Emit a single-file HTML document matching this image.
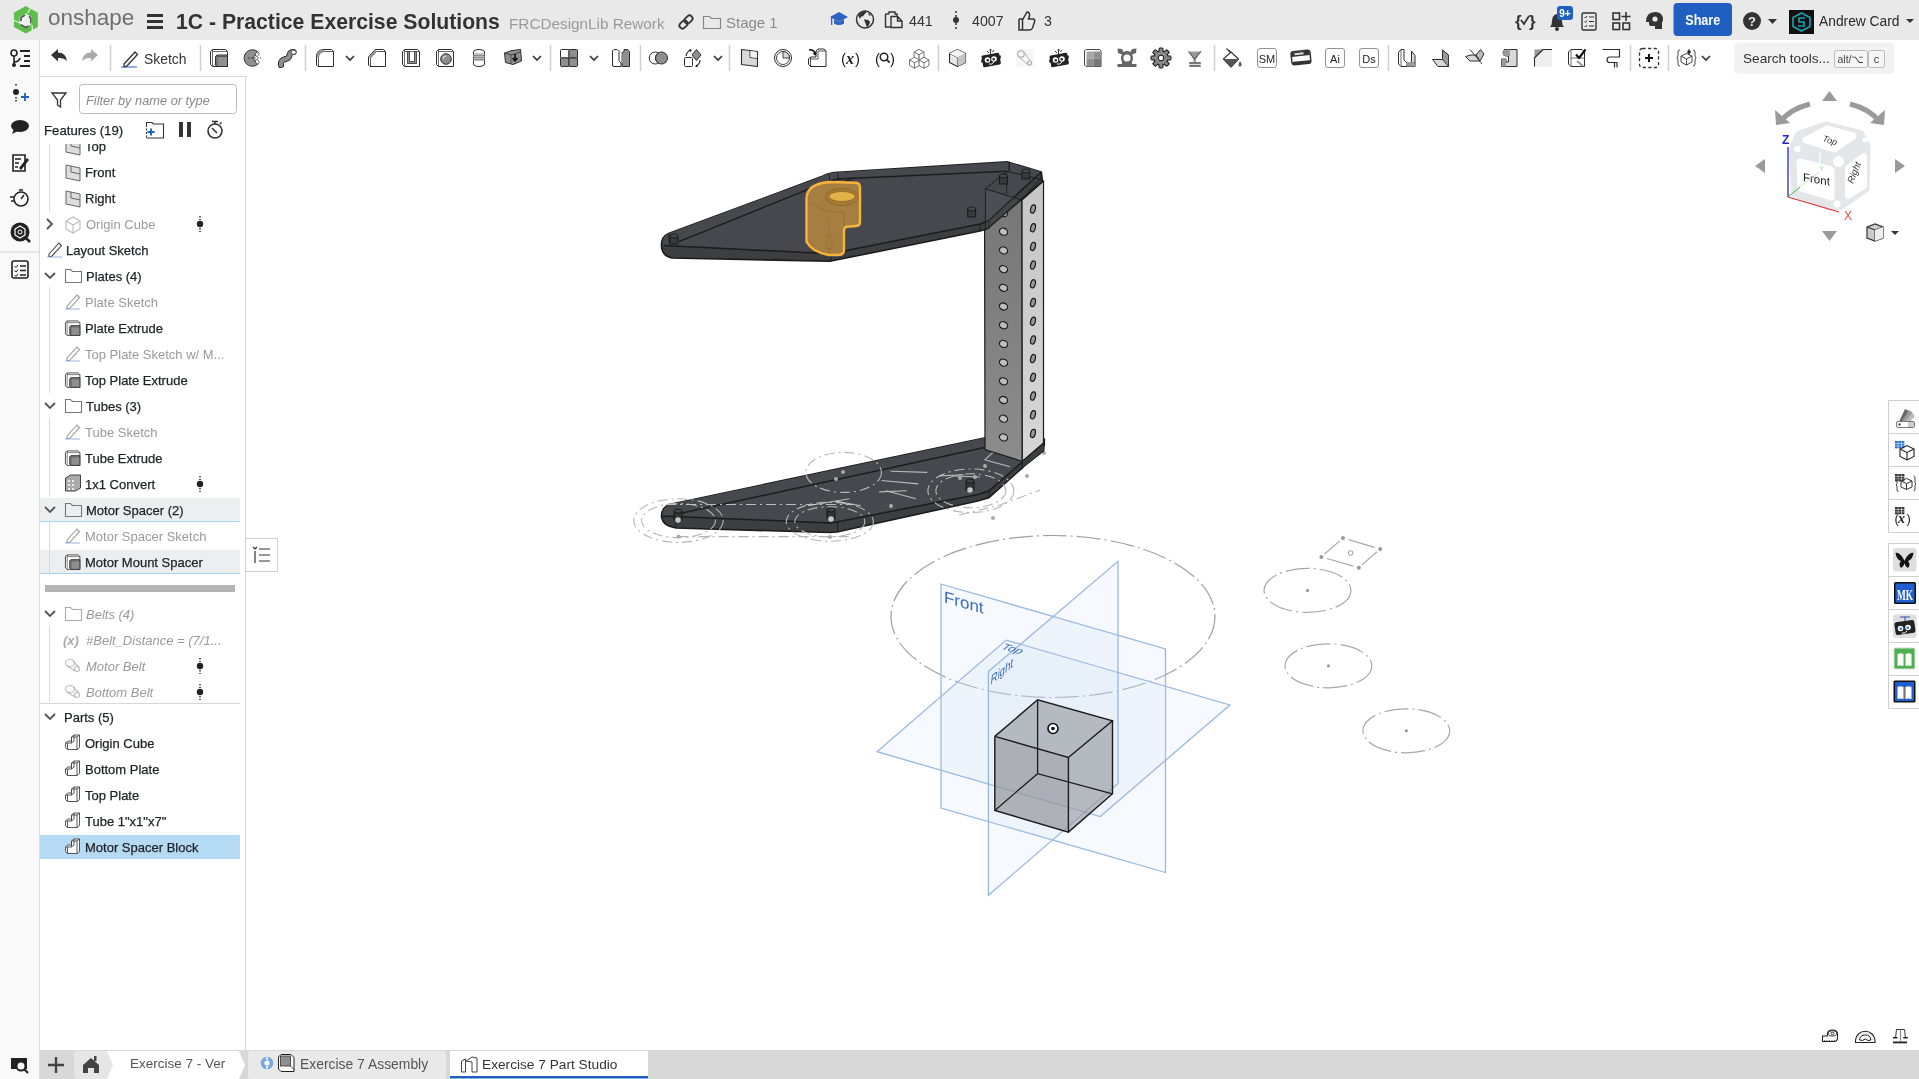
<!DOCTYPE html>
<html><head><meta charset="utf-8"><style>
html,body{margin:0;padding:0;width:1919px;height:1079px;overflow:hidden;background:#fff}
svg{display:block;will-change:transform;font-family:"Liberation Sans", sans-serif}
</style></head><body>
<svg width="1919" height="1079" viewBox="0 0 1919 1079">
<rect x="0" y="0" width="1919" height="1079" fill="#ffffff" />
<rect x="0" y="0" width="1919" height="40" fill="#e9e9e9" />
<rect x="0" y="40" width="40" height="1039" fill="#f9f9f9" />
<line x1="39.5" y1="40" x2="39.5" y2="1079" stroke="#dcdcdc" stroke-width="1" />
<line x1="40" y1="76.5" x2="245" y2="76.5" stroke="#d6d6d6" stroke-width="1" />
<line x1="245.5" y1="76" x2="245.5" y2="1050" stroke="#d6d6d6" stroke-width="1" />
<rect x="40" y="1050" width="1879" height="29" fill="#d8d8d8" />
<polygon points="25.8,6 37.8,12.8 37.8,27 25.8,33.6 13.9,27 13.9,12.8" fill="#5bbf4a"/><polygon points="25.8,13.5 32,17 32,24 25.8,27.5 19.6,24 19.6,17" fill="#eef2ee"/><path d="M13,20 L21,23.5 M30.5,8.5 L27.5,13 M32,25 L32.5,31" stroke="#e9f5e6" stroke-width="1.3"/><path d="M21,21 v-3.5 l4,-2.5 M28.8,16.5 l2,1.2 v5.8 M28.5,26 l-2.7,1.5 l-5,-2.8" fill="none" stroke="#5a5a5a" stroke-width="1.8"/>
<text x="48" y="25" font-size="22.5" fill="#6f6f6f" font-weight="normal" font-style="normal" text-anchor="start" >onshape</text>
<rect x="147" y="14.0" width="16" height="3" fill="#333" />
<rect x="147" y="20.0" width="16" height="3" fill="#333" />
<rect x="147" y="26.0" width="16" height="3" fill="#333" />
<text x="176" y="29" font-size="21.2" fill="#333" font-weight="bold" font-style="normal" text-anchor="start" >1C - Practice Exercise Solutions</text>
<text x="509" y="29" font-size="15.3" fill="#9a9a9a" font-weight="normal" font-style="normal" text-anchor="start" >FRCDesignLib Rework</text>
<g transform="translate(686,22) rotate(-45)" fill="none" stroke="#333" stroke-width="1.8"><rect x="-8" y="-3" width="9" height="6" rx="3"/><rect x="-1" y="-3" width="9" height="6" rx="3"/></g>
<path d="M703.5,16.5 h6 l2,2 h9 v10 h-17 z" fill="none" stroke="#888" stroke-width="1.2"/>
<text x="726" y="28" font-size="15" fill="#8a8a8a" font-weight="normal" font-style="normal" text-anchor="start" >Stage 1</text>
<g fill="#2d62c2"><polygon points="839,12 848,17 839,22 830,17"/><path d="M834,19.5 v4 q5,3 10,0 v-4 l-5,2.5 z"/><rect x="831" y="17" width="1.3" height="8"/></g>
<circle cx="865" cy="19.5" r="8.5" fill="none" stroke="#333" stroke-width="1.5"/><path d="M858.5,15.5 q2,-4 7,-4.5 l1,1.5 q-2,1 -2.5,2.5 q-1,2 -3,1.5 q0,2 -1.5,2 z M864,19.5 q4,-0.5 6,2 q0,3 -2,5 q-2,1 -2,-2 q-1,-2 -2,-5 z M868,12.5 q2,1 3,3 l-2,0 z" fill="#333"/>
<path d="M889,14 v-2 h6 v2 h2 v2 M885.5,14 h3.5 M885.5,14 v13 h5" fill="none" stroke="#333" stroke-width="1.4"/><path d="M891,16.5 h6.5 l4.5,4.5 v6.5 h-11 z M897.5,16.5 v4.5 h4.5" fill="none" stroke="#333" stroke-width="1.4"/>
<text x="909" y="26" font-size="14.2" fill="#333" font-weight="normal" font-style="normal" text-anchor="start" >441</text>
<circle cx="956" cy="20" r="3" fill="#333"/><line x1="956" y1="11" x2="956" y2="29" stroke="#333" stroke-width="1.5" stroke-dasharray="2,2"/>
<text x="972" y="26" font-size="14.2" fill="#333" font-weight="normal" font-style="normal" text-anchor="start" >4007</text>
<path d="M1019,19 h4 l4,-7 q3,0 2.5,4 l-1,3 h5 q2,1 1,3 l-2,6 q-1,2 -3,2 h-7 v-11 M1019,19 v11 h4" fill="none" stroke="#333" stroke-width="1.5"/>
<text x="1044" y="26" font-size="14.2" fill="#333" font-weight="normal" font-style="normal" text-anchor="start" >3</text>
<text x="1515" y="27" font-size="17" fill="#333" font-weight="bold">{</text><path d="M1521,20 l3,4 l5,-8" fill="none" stroke="#333" stroke-width="1.8"/><text x="1529" y="27" font-size="17" fill="#333" font-weight="bold">}</text>
<path d="M1550,27 q2,-2 2,-6 q0,-6 5,-7 q5,1 5,7 q0,4 2,6 z" fill="#333"/><circle cx="1557" cy="29" r="2" fill="#333"/>
<rect x="1557" y="6" width="16" height="14" fill="#1f5fc2" rx="3"/>
<text x="1565" y="17" font-size="10" fill="#fff" font-weight="bold" font-style="normal" text-anchor="middle" >9+</text>
<rect x="1582" y="13" width="14" height="17" rx="1.5" fill="none" stroke="#333" stroke-width="1.4"/><path d="M1584.5,17 l1,1 l1.5,-2 M1584.5,21.5 l1,1 l1.5,-2 M1584.5,26 l1,1 l1.5,-2" fill="none" stroke="#333" stroke-width="1"/><path d="M1589,17 h5 M1589,21.5 h5 M1589,26 h5" stroke="#333" stroke-width="1.2"/>
<g fill="none" stroke="#333" stroke-width="1.6"><rect x="1613" y="13" width="6.5" height="6.5"/><rect x="1613" y="23" width="6.5" height="6.5"/><rect x="1623" y="23" width="6.5" height="6.5"/></g><path d="M1626,12 v9 M1621.5,16.5 h9" stroke="#333" stroke-width="1.6"/>
<path d="M1646,22 q0,-10 9,-10 q8,0 8,8 l-1,3 v6 h-7 v-3 h-4 q-2,0 -2,-2 v-2 z" fill="#333"/><circle cx="1655" cy="19" r="2.6" fill="#e9e9e9"/>
<rect x="1673.5" y="3" width="58.5" height="33" fill="#1f5fc2" rx="4"/>
<text x="1702.75" y="25.3" font-size="14.5" fill="#ffffff" font-weight="bold" font-style="normal" text-anchor="middle" textLength="35" lengthAdjust="spacingAndGlyphs">Share</text>
<circle cx="1752" cy="21" r="9" fill="#333"/><text x="1752" y="26" font-size="13" fill="#e9e9e9" font-weight="bold" text-anchor="middle">?</text>
<polygon points="1768,19 1777,19 1772.5,24" fill="#333"/>
<rect x="1789" y="10" width="25" height="24" fill="#111" />
<g fill="none" stroke="#19a3b3" stroke-width="1.6"><polygon points="1801.5,13 1810,17.5 1810,26.5 1801.5,31 1793,26.5 1793,17.5"/><path d="M1805,18 h-6 v4 h5 v4 h-6"/></g>
<text x="1819" y="26" font-size="13.8" fill="#2a2a2a" font-weight="normal" font-style="normal" text-anchor="start" >Andrew Card</text>
<polygon points="1906,19 1914,19 1910,23" fill="#333"/>
<ellipse cx="1053" cy="616.5" rx="162" ry="81" fill="none" stroke="#a0a0a0" stroke-width="1.2" stroke-dasharray="24,4,2,4"/>
<polygon points="941,584 1165.5,649 1165.5,872.5 941,808" fill="rgba(205,222,242,0.18)" stroke="#9ab8df" stroke-width="1.3" />
<polygon points="877,751.7 1006.2,640.1 1229.9,705 1100.2,816.5" fill="rgba(205,222,242,0.18)" stroke="#9ab8df" stroke-width="1.3" />
<polygon points="988.4,671.6 1118,561.3 1118,783.5 988.4,895.3" fill="rgba(205,222,242,0.18)" stroke="#9ab8df" stroke-width="1.3" />
<text x="0" y="0" font-size="16.3" fill="#3a6cb8" transform="matrix(1.04,0.3,0,1,944,602.3)">Front</text>
<text x="0" y="0" font-size="11" fill="#3a6cb8" transform="matrix(1.13,0.33,-0.755,0.656,1000,648.4)">Top</text>
<text x="0" y="0" font-size="12" fill="#3a6cb8" transform="matrix(0.80,-0.66,-0.12,1.15,990.3,685.3)">Right</text>
<polygon points="994.8,736.4 1037.6,699.8 1112.5,720.9 1112.5,793.8 1068.4,832.1 994.8,810.4" fill="rgba(150,152,156,0.62)" stroke="none" stroke-width="1" />
<polygon points="994.8,736.4 1068.4,757.5 1068.4,832.1 994.8,810.4" fill="rgba(120,122,126,0.15)" stroke="none" stroke-width="1" />
<polyline points="994.8,736.4 1037.6,699.8 1112.5,720.9 1068.4,757.5 994.8,736.4" fill="none" stroke="#1c1c1c" stroke-width="1.4" />
<polyline points="994.8,736.4 994.8,810.4 1068.4,832.1 1112.5,793.8 1112.5,720.9" fill="none" stroke="#1c1c1c" stroke-width="1.4" />
<polyline points="1068.4,757.5 1068.4,832.1" fill="none" stroke="#1c1c1c" stroke-width="1.4" />
<polyline points="1037.6,699.8 1037.6,773.7" fill="none" stroke="#1c1c1c" stroke-width="1.3" />
<polyline points="994.8,810.4 1037.6,773.7 1112.5,793.8" fill="none" stroke="#1c1c1c" stroke-width="1.3" />
<circle cx="1053" cy="728.5" r="5" fill="#fff" stroke="#111" stroke-width="1.6"/><circle cx="1053" cy="728.5" r="1.8" fill="#111"/>
<ellipse cx="1307.5" cy="590.4" rx="43.4" ry="22" fill="none" stroke="#a8a8a8" stroke-width="1.2" stroke-dasharray="24,4,2,4"/><circle cx="1307.5" cy="590.4" r="1.6" fill="#999"/>
<ellipse cx="1328.4" cy="665.8" rx="43.4" ry="22" fill="none" stroke="#a8a8a8" stroke-width="1.2" stroke-dasharray="24,4,2,4"/><circle cx="1328.4" cy="665.8" r="1.6" fill="#999"/>
<ellipse cx="1406.3" cy="730.8" rx="43.4" ry="22" fill="none" stroke="#a8a8a8" stroke-width="1.2" stroke-dasharray="24,4,2,4"/><circle cx="1406.3" cy="730.8" r="1.6" fill="#999"/>
<polyline points="1348.58,539.65 1374.6200000000001,547.35" fill="none" stroke="#a8a8a8" stroke-width="1.2" />
<polyline points="1376.99,551.8050000000001 1362.01,564.895" fill="none" stroke="#a8a8a8" stroke-width="1.2" />
<polyline points="1353.19,566.08 1327.01,558.52" fill="none" stroke="#a8a8a8" stroke-width="1.2" />
<polyline points="1324.64,554.0649999999999 1339.76,540.835" fill="none" stroke="#a8a8a8" stroke-width="1.2" />
<circle cx="1343" cy="538" r="2" fill="#999"/>
<circle cx="1380.2" cy="549" r="2" fill="#999"/>
<circle cx="1358.8" cy="567.7" r="2" fill="#999"/>
<circle cx="1321.4" cy="556.9" r="2" fill="#999"/>
<circle cx="1350.6" cy="553" r="2.3" fill="#fff" stroke="#999" stroke-width="1"/>
<path d="M669.3,504.5 L1008,433 L1044.3,439 L1044.3,446 L1022.4,467.8 L989,497.7 L977.7,501 L837,532 L829.8,532.5 L676,528 Q663,526 661.5,517 Q661,508 669.3,504.5 Z" fill="#3c3e42" stroke="#1c1c1c" stroke-width="1.6" stroke-linejoin="round"/>
<path d="M669.3,504.5 L1008,433 L1044.3,439 L1022.4,462 L989,490.8 L978.9,494.2 L837.9,521.7 L829.8,522.9 L663,516 Q661,509 669.3,504.5 Z" fill="#46484e"/>
<polyline points="662.4,516 829.8,522.9 837.9,521.7 978.9,494.2 989,490.8 1022.4,462 1044.3,439" fill="none" stroke="#1c1c1c" stroke-width="1.5" />
<polyline points="678.7,513.7 984.5,447.5" fill="none" stroke="#1c1c1c" stroke-width="1.4" />
<polyline points="676,519 676,528" fill="none" stroke="#1c1c1c" stroke-width="0.9" />
<polyline points="837.5,522 837.5,532" fill="none" stroke="#1c1c1c" stroke-width="1" />
<polyline points="989,491 989,498" fill="none" stroke="#1c1c1c" stroke-width="1" />
<polyline points="1022.4,462 1022.4,468" fill="none" stroke="#1c1c1c" stroke-width="1" />
<rect x="674" y="511" width="8" height="9" fill="#333" stroke="#111" stroke-width="0.8"/><ellipse cx="678" cy="511" rx="4" ry="2" fill="#444" stroke="#111" stroke-width="0.8"/><circle cx="678" cy="520" r="2.8" fill="#c8c8c8"/>
<rect x="827" y="510" width="8" height="9" fill="#333" stroke="#111" stroke-width="0.8"/><ellipse cx="831" cy="510" rx="4" ry="2" fill="#444" stroke="#111" stroke-width="0.8"/><circle cx="831" cy="519" r="2.8" fill="#c8c8c8"/>
<rect x="966" y="481" width="8" height="9" fill="#333" stroke="#111" stroke-width="0.8"/><ellipse cx="970" cy="481" rx="4" ry="2" fill="#444" stroke="#111" stroke-width="0.8"/><circle cx="970" cy="490" r="2.8" fill="#c8c8c8"/>
<ellipse cx="678.5" cy="520.6" rx="44.7" ry="21.8" fill="none" stroke="#b5b5b5" stroke-width="1.1" stroke-dasharray="10,4,2,4"/>
<ellipse cx="678.5" cy="520.6" rx="37" ry="17" fill="none" stroke="#b5b5b5" stroke-width="1.1" stroke-dasharray="10,4,2,4"/>
<ellipse cx="829.8" cy="521.7" rx="43.6" ry="19.5" fill="none" stroke="#b5b5b5" stroke-width="1.1" stroke-dasharray="10,4,2,4"/>
<ellipse cx="829.8" cy="521.7" rx="35" ry="15" fill="none" stroke="#b5b5b5" stroke-width="1.1" stroke-dasharray="10,4,2,4"/>
<ellipse cx="843.6" cy="472.4" rx="37.8" ry="20" fill="none" stroke="#b5b5b5" stroke-width="1.1" stroke-dasharray="10,4,2,4"/>
<ellipse cx="970.9" cy="490.8" rx="43" ry="21.8" fill="none" stroke="#b5b5b5" stroke-width="1.1" stroke-dasharray="10,4,2,4"/>
<ellipse cx="970.9" cy="490.8" rx="35" ry="17" fill="none" stroke="#b5b5b5" stroke-width="1.1" stroke-dasharray="10,4,2,4"/>
<polyline points="666,504.5 854,504.5" fill="none" stroke="rgba(200,200,200,0.9)" stroke-width="1.1" stroke-dasharray="10,4,2,4"/>
<polyline points="678.5,536.6 849,536.6" fill="none" stroke="#b5b5b5" stroke-width="1.1" stroke-dasharray="10,4,2,4"/>
<polyline points="890.6,471.3 927.3,472.4" fill="none" stroke="rgba(200,200,200,0.9)" stroke-width="1.1" />
<polyline points="881.5,480.5 918.2,483.9" fill="none" stroke="rgba(200,200,200,0.9)" stroke-width="1.1" />
<polyline points="879.2,491.9 906.7,490.8" fill="none" stroke="rgba(200,200,200,0.9)" stroke-width="1.1" />
<polyline points="886,490.8 915.9,498.8" fill="none" stroke="rgba(200,200,200,0.9)" stroke-width="1.1" />
<polyline points="938.8,475.9 964,474.7" fill="none" stroke="rgba(200,200,200,0.9)" stroke-width="1.1" />
<polyline points="955,476 980,477" fill="none" stroke="rgba(200,200,200,0.9)" stroke-width="1.1" />
<polyline points="808,505.7 849.4,498.8" fill="none" stroke="rgba(200,200,200,0.9)" stroke-width="1.1" />
<polyline points="835.6,501.1 860.8,505.7" fill="none" stroke="rgba(200,200,200,0.9)" stroke-width="1.1" />
<polyline points="984.7,459.8 1009.9,466.7" fill="none" stroke="rgba(200,200,200,0.9)" stroke-width="1.1" />
<polyline points="984.7,459.8 1005.3,441.5" fill="none" stroke="rgba(200,200,200,0.9)" stroke-width="1.1" />
<polyline points="1005.3,441.5 1030,447" fill="none" stroke="rgba(200,200,200,0.9)" stroke-width="1.1" />
<polyline points="959,515 1000,505 1040,490" fill="none" stroke="#b5b5b5" stroke-width="1.1" stroke-dasharray="10,4,2,4"/>
<circle cx="678.5" cy="536.6" r="2" fill="#aaa"/>
<circle cx="830" cy="537" r="2" fill="#aaa"/>
<circle cx="843" cy="472" r="2" fill="#aaa"/>
<circle cx="836" cy="479" r="2" fill="#aaa"/>
<circle cx="891" cy="506" r="2" fill="#aaa"/>
<circle cx="960" cy="478" r="2" fill="#aaa"/>
<circle cx="975" cy="477" r="2" fill="#aaa"/>
<circle cx="993" cy="518" r="2" fill="#aaa"/>
<circle cx="1027" cy="476" r="2" fill="#aaa"/>
<circle cx="1044" cy="453" r="2" fill="#aaa"/>
<circle cx="985" cy="466" r="2" fill="#aaa"/>
<defs><linearGradient id="tl" x1="0" y1="0" x2="0" y2="1"><stop offset="0" stop-color="#767676"/><stop offset="1" stop-color="#8c8c8c"/></linearGradient><linearGradient id="tr" x1="0" y1="0" x2="0" y2="1"><stop offset="0" stop-color="#c6c6c6"/><stop offset="1" stop-color="#d6d6d6"/></linearGradient><linearGradient id="yel" x1="0" y1="0" x2="1" y2="0"><stop offset="0" stop-color="#c4913a"/><stop offset="1" stop-color="#b08236"/></linearGradient></defs>
<polygon points="984.5,189 1022,200 1022.3,461.3 985,449.6" fill="url(#tl)" stroke="#1c1c1c" stroke-width="1.2" />
<polygon points="1022,200 1043.5,181 1043.5,443 1022.3,461.3" fill="url(#tr)" stroke="#1c1c1c" stroke-width="1.2" />
<polygon points="1022.3,461.3 1044,443 1044,451 1022.3,468" fill="#3c3e42" stroke="#1c1c1c" stroke-width="1" />
<ellipse cx="1003.5" cy="213.0" rx="4.2" ry="3.4" transform="rotate(25 1003.5 213.0)" fill="#bdbdbd" stroke="#1a1a1a" stroke-width="1.2"/>
<ellipse cx="1033" cy="209.0" rx="2.3" ry="4.2" transform="rotate(15 1033 209.0)" fill="#999" stroke="#1a1a1a" stroke-width="1.2"/>
<ellipse cx="1003.5" cy="231.7" rx="4.2" ry="3.4" transform="rotate(25 1003.5 231.7)" fill="#bdbdbd" stroke="#1a1a1a" stroke-width="1.2"/>
<ellipse cx="1033" cy="227.7" rx="2.3" ry="4.2" transform="rotate(15 1033 227.7)" fill="#999" stroke="#1a1a1a" stroke-width="1.2"/>
<ellipse cx="1003.5" cy="250.4" rx="4.2" ry="3.4" transform="rotate(25 1003.5 250.4)" fill="#bdbdbd" stroke="#1a1a1a" stroke-width="1.2"/>
<ellipse cx="1033" cy="246.4" rx="2.3" ry="4.2" transform="rotate(15 1033 246.4)" fill="#999" stroke="#1a1a1a" stroke-width="1.2"/>
<ellipse cx="1003.5" cy="269.1" rx="4.2" ry="3.4" transform="rotate(25 1003.5 269.1)" fill="#bdbdbd" stroke="#1a1a1a" stroke-width="1.2"/>
<ellipse cx="1033" cy="265.1" rx="2.3" ry="4.2" transform="rotate(15 1033 265.1)" fill="#999" stroke="#1a1a1a" stroke-width="1.2"/>
<ellipse cx="1003.5" cy="287.8" rx="4.2" ry="3.4" transform="rotate(25 1003.5 287.8)" fill="#bdbdbd" stroke="#1a1a1a" stroke-width="1.2"/>
<ellipse cx="1033" cy="283.8" rx="2.3" ry="4.2" transform="rotate(15 1033 283.8)" fill="#999" stroke="#1a1a1a" stroke-width="1.2"/>
<ellipse cx="1003.5" cy="306.5" rx="4.2" ry="3.4" transform="rotate(25 1003.5 306.5)" fill="#bdbdbd" stroke="#1a1a1a" stroke-width="1.2"/>
<ellipse cx="1033" cy="302.5" rx="2.3" ry="4.2" transform="rotate(15 1033 302.5)" fill="#999" stroke="#1a1a1a" stroke-width="1.2"/>
<ellipse cx="1003.5" cy="325.2" rx="4.2" ry="3.4" transform="rotate(25 1003.5 325.2)" fill="#bdbdbd" stroke="#1a1a1a" stroke-width="1.2"/>
<ellipse cx="1033" cy="321.2" rx="2.3" ry="4.2" transform="rotate(15 1033 321.2)" fill="#999" stroke="#1a1a1a" stroke-width="1.2"/>
<ellipse cx="1003.5" cy="343.9" rx="4.2" ry="3.4" transform="rotate(25 1003.5 343.9)" fill="#bdbdbd" stroke="#1a1a1a" stroke-width="1.2"/>
<ellipse cx="1033" cy="339.9" rx="2.3" ry="4.2" transform="rotate(15 1033 339.9)" fill="#999" stroke="#1a1a1a" stroke-width="1.2"/>
<ellipse cx="1003.5" cy="362.6" rx="4.2" ry="3.4" transform="rotate(25 1003.5 362.6)" fill="#bdbdbd" stroke="#1a1a1a" stroke-width="1.2"/>
<ellipse cx="1033" cy="358.6" rx="2.3" ry="4.2" transform="rotate(15 1033 358.6)" fill="#999" stroke="#1a1a1a" stroke-width="1.2"/>
<ellipse cx="1003.5" cy="381.3" rx="4.2" ry="3.4" transform="rotate(25 1003.5 381.3)" fill="#bdbdbd" stroke="#1a1a1a" stroke-width="1.2"/>
<ellipse cx="1033" cy="377.3" rx="2.3" ry="4.2" transform="rotate(15 1033 377.3)" fill="#999" stroke="#1a1a1a" stroke-width="1.2"/>
<ellipse cx="1003.5" cy="400.0" rx="4.2" ry="3.4" transform="rotate(25 1003.5 400.0)" fill="#bdbdbd" stroke="#1a1a1a" stroke-width="1.2"/>
<ellipse cx="1033" cy="396.0" rx="2.3" ry="4.2" transform="rotate(15 1033 396.0)" fill="#999" stroke="#1a1a1a" stroke-width="1.2"/>
<ellipse cx="1003.5" cy="418.7" rx="4.2" ry="3.4" transform="rotate(25 1003.5 418.7)" fill="#bdbdbd" stroke="#1a1a1a" stroke-width="1.2"/>
<ellipse cx="1033" cy="414.7" rx="2.3" ry="4.2" transform="rotate(15 1033 414.7)" fill="#999" stroke="#1a1a1a" stroke-width="1.2"/>
<ellipse cx="1003.5" cy="437.4" rx="4.2" ry="3.4" transform="rotate(25 1003.5 437.4)" fill="#bdbdbd" stroke="#1a1a1a" stroke-width="1.2"/>
<ellipse cx="1033" cy="433.4" rx="2.3" ry="4.2" transform="rotate(15 1033 433.4)" fill="#999" stroke="#1a1a1a" stroke-width="1.2"/>
<path d="M668.5,233.5 L821.6,176.6 Q827,173.5 833.8,172.5 L1007.5,161.9 L1041.25,171.9 L1042.5,181.25 L987.5,228.75 L980,231 L829.7,261.3 L672,258 Q662,256 661.5,246 Q661,237 668.5,233.5 Z" fill="#3c3e42" stroke="#1c1c1c" stroke-width="1.6" stroke-linejoin="round"/>
<path d="M668.5,233.5 L821.6,176.6 Q827,173.5 833.8,172.5 L1007.5,161.9 L1041.25,171.9 L988.75,220 L980,223.75 L833.8,252.5 L825,253 L663,245 Q661,237 668.5,233.5 Z" fill="#46484e"/>
<polyline points="664,245.5 825,253.5 833.8,253 980,224 988.75,220.5 1041.25,172" fill="none" stroke="#1c1c1c" stroke-width="1.5" />
<polyline points="679,241.7 823,183.3 837.6,179 1006.7,171.3" fill="none" stroke="#1c1c1c" stroke-width="1.4" />
<polyline points="829.5,175 829.5,183" fill="none" stroke="#1c1c1c" stroke-width="0.9" />
<polyline points="838,172.5 838,180" fill="none" stroke="#1c1c1c" stroke-width="0.9" />
<polyline points="669,234 669,243" fill="none" stroke="#1c1c1c" stroke-width="0.9" />
<polyline points="831,253.5 831,261.3" fill="none" stroke="#1c1c1c" stroke-width="0.9" />
<polyline points="980,224 980,231" fill="none" stroke="#1c1c1c" stroke-width="0.9" />
<polyline points="989,220.5 989,229" fill="none" stroke="#1c1c1c" stroke-width="0.9" />
<polyline points="1009.2,162 1009.2,171" fill="none" stroke="#1c1c1c" stroke-width="0.9" />
<polyline points="1041,172 1041,181" fill="none" stroke="#1c1c1c" stroke-width="0.9" />
<polygon points="985.4,188.8 1021.7,200 989,228.5 985.4,229.5" fill="rgba(120,120,124,0.12)" stroke="none" stroke-width="1" />
<polyline points="985.4,188.8 1006.7,171.3 1040,179.2 1021.7,200 985.4,188.8" fill="none" stroke="#1c1c1c" stroke-width="1" />
<polyline points="985.4,188.8 985.4,229" fill="none" stroke="#1c1c1c" stroke-width="1" />
<polyline points="1006.7,171.3 1006.7,194" fill="none" stroke="#1c1c1c" stroke-width="0.8" />
<polyline points="1009.2,161.7 1009.2,171" fill="none" stroke="#1c1c1c" stroke-width="0.8" />
<rect x="670" y="236" width="8" height="8" fill="#3a3a3e" stroke="#111" stroke-width="0.8"/><ellipse cx="674" cy="236" rx="4" ry="2" fill="#47494d" stroke="#111" stroke-width="0.8"/>
<rect x="967.7" y="209" width="8" height="8" fill="#3a3a3e" stroke="#111" stroke-width="0.8"/><ellipse cx="971.7" cy="209" rx="4" ry="2" fill="#47494d" stroke="#111" stroke-width="0.8"/>
<rect x="999.4" y="176" width="8" height="8" fill="#3a3a3e" stroke="#111" stroke-width="0.8"/><ellipse cx="1003.4" cy="176" rx="4" ry="2" fill="#47494d" stroke="#111" stroke-width="0.8"/>
<rect x="1021.9000000000001" y="171" width="8" height="8" fill="#3a3a3e" stroke="#111" stroke-width="0.8"/><ellipse cx="1025.9" cy="171" rx="4" ry="2" fill="#47494d" stroke="#111" stroke-width="0.8"/>
<rect x="845" y="182" width="8" height="8" fill="#3a3a3e" stroke="#111" stroke-width="0.8"/><ellipse cx="849" cy="182" rx="4" ry="2" fill="#47494d" stroke="#111" stroke-width="0.8"/>
<path d="M806.5,241.7 L806.5,198 Q807,184 829,182 L856,182.7 Q860,183 860,188 L860,222 Q860,226 856,226 L847,226.8 Q844,227 844,231 L844,250 Q844,255 838,255 L829,255 Q812,252 806.5,241.7 Z" fill="#ac8240" fill-opacity="0.95" stroke="#f7b33a" stroke-width="2.4"/>
<ellipse cx="842" cy="197" rx="16.5" ry="8.5" fill="#a67a35" stroke="#8e6a2a" stroke-width="1"/><ellipse cx="842" cy="196.5" rx="13" ry="5" fill="#e2b248" stroke="#8e6a2a" stroke-width="0.8"/><path d="M810,203 q15,10 34,9 v14" fill="none" stroke="#8e6a2a" stroke-width="0.9" opacity="0.7"/>
<path d="M829,220 v33 M812,246 v0" stroke="#8e6a2a" stroke-width="0.8" opacity="0.6"/><rect x="826" y="235" width="6" height="14" rx="2" fill="none" stroke="#8e6a2a" stroke-width="0.8" opacity="0.7"/>
<polygon points="1822,101 1829.5,91 1837,101" fill="#9a9a9a" stroke="none" stroke-width="1" />
<polygon points="1755,166 1765,159 1765,173" fill="#9a9a9a" stroke="none" stroke-width="1" />
<polygon points="1905,166 1895,159 1895,173" fill="#9a9a9a" stroke="none" stroke-width="1" />
<polygon points="1822,231 1837,231 1829.5,241" fill="#9a9a9a" stroke="none" stroke-width="1" />
<path d="M1810,104 q-20,5 -30,18" fill="none" stroke="#9a9a9a" stroke-width="5"/><polygon points="1775,110 1776,125 1790,123" fill="#9a9a9a"/>
<path d="M1850,104 q20,5 30,18" fill="none" stroke="#9a9a9a" stroke-width="5"/><polygon points="1885,110 1884,125 1870,123" fill="#9a9a9a"/>
<polygon points="1797,133 1826,123 1862,132 1869,146 1868,190 1842,208 1830,209 1793,195 1790,150" fill="#e4e7ea" stroke="#e4e7ea" stroke-width="3" stroke-linejoin="round"/>
<polygon points="1806,140 1827,129 1853,136 1834,149" fill="#fff" stroke="#fff" stroke-width="7" stroke-linejoin="round"/>
<polygon points="1800,162 1831,170 1831,197 1801,188" fill="#fff" stroke="#fff" stroke-width="7" stroke-linejoin="round"/>
<polygon points="1848,168 1864,156 1864,186 1848,196" fill="#fff" stroke="#fff" stroke-width="6" stroke-linejoin="round"/>
<circle cx="1838.5" cy="161.5" r="5.5" fill="#fff"/><circle cx="1797.5" cy="149" r="3.2" fill="#fff"/><circle cx="1837" cy="204" r="3.5" fill="#fff"/><circle cx="1865" cy="140" r="2.5" fill="#fff"/>
<path d="M1820,152 v12" stroke="#fff" stroke-width="1.2"/>
<text x="1819.5" y="171" font-size="6.5" fill="#9fd49f" font-weight="normal" font-style="normal" text-anchor="start" >Y</text>
<text font-size="9" fill="#333" transform="translate(1822,141) rotate(18)" font-style="italic">Top</text>
<text font-size="11.5" fill="#222" transform="matrix(1.0,0.17,0,1,1803,181)">Front</text>
<text font-size="9.5" fill="#333" transform="translate(1853,184) rotate(-68)" font-style="italic">Right</text>
<path d="M1788,197 v-50" stroke="#2b2bb8" stroke-width="1.3"/><path d="M1788,197 l51,15" stroke="#e03030" stroke-width="1.3"/><path d="M1788,197 l12,-10" stroke="#40b040" stroke-width="1"/><path d="M1800,187 l19,-15" stroke="#b5e0b5" stroke-width="0.8"/>
<text x="1782" y="144" font-size="12" fill="#2222cc" font-weight="bold" font-style="normal" text-anchor="start" >Z</text>
<text x="1844" y="220" font-size="12" fill="#e05050" font-weight="normal" font-style="normal" text-anchor="start" >X</text>
<path d="M1867,227 l8,-3 l8,3 v11 l-8,3 l-8,-3 z" fill="#ccc" stroke="#333" stroke-width="1.2"/><path d="M1867,227 l8,3 l8,-3 M1875,230 v11" fill="none" stroke="#333" stroke-width="1.1"/><path d="M1875,230 l8,-3 v11 l-8,3 z" fill="#eee"/>
<polygon points="1891,231 1899,231 1895,235" fill="#333"/>
<g fill="none" stroke="#222" stroke-width="1.6"><circle cx="14" cy="53" r="3"/><path d="M14,56 v9 M14,62 q5,0 6,-4"/></g><circle cx="14" cy="65" r="2" fill="#222"/><path d="M20,51 h10 M24,56 h6 M24,61 h6 M20,66 h10" stroke="#222" stroke-width="2"/>
<path d="M51,55 l7,-6 v3.5 q8,0 9,8.5 q-3.5,-3.5 -9,-3 v3.5 z" fill="#333"/>
<path d="M98,55 l-7,-6 v3.5 q-8,0 -9,8.5 q3.5,-3.5 9,-3 v3.5 z" fill="#aaa"/>
<line x1="110.5" y1="45" x2="110.5" y2="71" stroke="#cfcfcf" stroke-width="1.5" />
<path d="M124,64 l11,-12 l2.5,2.5 l-11,12 h-2.5 z" fill="none" stroke="#333" stroke-width="1.3"/><line x1="121" y1="67" x2="137" y2="67" stroke="#2d62c2" stroke-width="1"/>
<text x="144" y="64" font-size="13.9" fill="#333" font-weight="normal" font-style="normal" text-anchor="start" >Sketch</text>
<line x1="200.5" y1="45" x2="200.5" y2="71" stroke="#cfcfcf" stroke-width="1.5" />
<g transform="translate(210,49)" stroke-linejoin="round"><path d="M0.5,2.5 L2.5,0.5 H15.5 L17.5,2.5 V17.5 H2.5 L0.5,15.5 Z" fill="#fff" stroke="#2e2e2e"/><path d="M2.5,0.5 V17.5 M2.5,2.5 H17.5" fill="none" stroke="#2e2e2e" stroke-width="0.7"/><path d="M5.5,7.5 L7,6 H17.5 V17.5 H7 L5.5,16 Z" fill="#8f8f8f" stroke="#2e2e2e"/><path d="M7,6 V17.5 M7,7.5 H17.5" stroke="#2e2e2e" stroke-width="0.6" fill="none"/></g>
<g transform="translate(244,49)" stroke-linejoin="round"><path d="M13.5,2.5 A8.3,8.3 0 1 0 13.5,15.5 L9,9 Z" fill="#8f8f8f" stroke="#2e2e2e" stroke-width="0.9"/><ellipse cx="13.2" cy="5.2" rx="1.6" ry="2.3" transform="rotate(35 13.2 5.2)" fill="#fff" stroke="#2e2e2e" stroke-width="0.7"/><ellipse cx="13.2" cy="12.8" rx="1.6" ry="2.3" transform="rotate(-35 13.2 12.8)" fill="#fff" stroke="#2e2e2e" stroke-width="0.7"/><path d="M4,9 H17" stroke="#2e2e2e" stroke-width="0.9" stroke-dasharray="1.8,1.2"/></g>
<g transform="translate(278,49)" stroke-linejoin="round"><path d="M3,16 C2,9 9,11 10.5,8.5 C12,6 11,3 15.5,3" fill="none" stroke="#2e2e2e" stroke-width="6.2" stroke-linecap="round"/><path d="M3,16 C2,9 9,11 10.5,8.5 C12,6 11,3 15.5,3" fill="none" stroke="#8f8f8f" stroke-width="4.3" stroke-linecap="round"/><ellipse cx="15.6" cy="3.2" rx="2.6" ry="2.2" fill="#fff" stroke="#2e2e2e" stroke-width="0.9"/></g>
<line x1="305.5" y1="45" x2="305.5" y2="71" stroke="#cfcfcf" stroke-width="1.5" />
<g transform="translate(316,49)" stroke-linejoin="round"><path d="M0.5,16 V8 Q0.5,0.5 8,0.5 H15.5 L17.5,2.5 V17.5 H2 Z" fill="#fff" stroke="#2e2e2e"/><path d="M2.5,17.5 V8.5 Q2.5,2.5 9,2.5 H17.5" fill="none" stroke="#2e2e2e" stroke-width="0.8"/><path d="M1,8 Q1,1 8,1 L9,2.5 Q3,2.5 2.5,8.5 Z" fill="#8f8f8f"/></g>
<path d="M346,56 l4,4 l4,-4" fill="none" stroke="#333" stroke-width="1.6"/>
<g transform="translate(368,49)" stroke-linejoin="round"><path d="M0.5,16 V8 L7,0.5 H15.5 L17.5,2.5 V17.5 H2 Z" fill="#fff" stroke="#2e2e2e"/><path d="M2.5,17.5 V9 L8.5,2.5 H17.5" fill="none" stroke="#2e2e2e" stroke-width="0.8"/><path d="M1,8 L7,1 L8.5,2.5 L2.5,9 Z" fill="#8f8f8f"/></g>
<g transform="translate(402,49)" stroke-linejoin="round"><path d="M0.5,2.5 L2.5,0.5 H15.5 L17.5,2.5 V17.5 H2.5 L0.5,15.5 Z" fill="#fff" stroke="#2e2e2e"/><path d="M2.5,0.5 V17.5 M2.5,2.5 H17.5" fill="none" stroke="#2e2e2e" stroke-width="0.7"/><path d="M5.5,2.5 V14.5 H14.5 V2.5 H12.5 V12.5 H7.5 V2.5 Z" fill="#8f8f8f" stroke="#2e2e2e" stroke-width="0.8"/></g>
<g transform="translate(436,49)" stroke-linejoin="round"><path d="M0.5,2.5 L2.5,0.5 H15.5 L17.5,2.5 V17.5 H2.5 L0.5,15.5 Z" fill="#fff" stroke="#2e2e2e"/><path d="M2.5,0.5 V17.5 M2.5,2.5 H17.5" fill="none" stroke="#2e2e2e" stroke-width="0.7"/><circle cx="10" cy="10" r="5.3" fill="#8f8f8f" stroke="#2e2e2e"/><path d="M7,10 A3,3 0 0 1 10,7" fill="none" stroke="#fff" stroke-width="0.8"/></g>
<g transform="translate(473,49)" stroke-linejoin="round"><path d="M0.5,3 A5.5,2.5 0 0 1 11.5,3 V15 A5.5,2.5 0 0 1 0.5,15 Z" fill="#fff" stroke="#2e2e2e"/><path d="M0.5,4.5 H11.5 V12 H0.5 Z" fill="#8f8f8f"/><path d="M0.5,5.5 H11.5 M0.5,7.5 H11.5 M0.5,9.5 H11.5 M0.5,11.5 H11.5" stroke="#ccc" stroke-width="0.7"/></g>
<g transform="translate(504,49)" stroke-linejoin="round"><path d="M0.5,4 L8,1.5 L16.5,0.5 L17.5,12 L9,15.5 L1.5,13.5 Z" fill="#8f8f8f" stroke="#2e2e2e"/><path d="M0.5,4 L7,6 L17,3" fill="none" stroke="#2e2e2e" stroke-width="0.8"/><path d="M7,6 V15" stroke="#2e2e2e" stroke-width="0.6"/><path d="M11,5 V11 M8.5,9 L11,12 L13.5,9" fill="none" stroke="#111" stroke-width="1.6"/></g>
<path d="M533,56 l4,4 l4,-4" fill="none" stroke="#333" stroke-width="1.6"/>
<line x1="550.5" y1="45" x2="550.5" y2="71" stroke="#cfcfcf" stroke-width="1.5" />
<g transform="translate(560,49)" stroke-linejoin="round"><rect x="0.5" y="0.5" width="8.5" height="8.5" rx="1" fill="#fff" stroke="#2e2e2e"/><rect x="9" y="0.5" width="8.5" height="8.5" rx="1" fill="#8f8f8f" stroke="#2e2e2e"/><rect x="0.5" y="9" width="8.5" height="8.5" rx="1" fill="#8f8f8f" stroke="#2e2e2e"/><rect x="9" y="9" width="8.5" height="8.5" rx="1" fill="#8f8f8f" stroke="#2e2e2e"/></g>
<path d="M590,56 l4,4 l4,-4" fill="none" stroke="#333" stroke-width="1.6"/>
<g transform="translate(612,49)" stroke-linejoin="round"><path d="M0.5,17 V2 L2,0.5 H5 L7,2.5 V12 L9,14 V17.5 H2 Z" fill="#fff" stroke="#2e2e2e"/><path d="M10,17.5 V4 L12,2.5 V0.5 H15.5 L17.5,2.5 V17.5 Z" fill="#8f8f8f" stroke="#2e2e2e"/><path d="M7,1 L10,5 V14" fill="none" stroke="#bbb" stroke-width="1"/></g>
<line x1="640.5" y1="45" x2="640.5" y2="71" stroke="#cfcfcf" stroke-width="1.5" />
<g transform="translate(649,49)" stroke-linejoin="round"><circle cx="6.2" cy="9" r="6" fill="#fff" stroke="#2e2e2e"/><circle cx="12.5" cy="9" r="6" fill="#8f8f8f" stroke="#2e2e2e"/><path d="M9.35,3.9 A6,6 0 0 0 9.35,14.1" fill="none" stroke="#2e2e2e" stroke-width="0.8"/></g>
<g transform="translate(684,49)" stroke-linejoin="round"><rect x="0.5" y="8.5" width="8" height="9" rx="1" fill="#fff" stroke="#2e2e2e"/><path d="M12.5,0.5 L17,6 L12.5,11.5 L8,6 Z" fill="#8f8f8f" stroke="#2e2e2e"/><path d="M2,7 Q3,2 7,1" fill="none" stroke="#2e2e2e" stroke-width="1.2"/><path d="M5.5,0 L8,1 L6,3" fill="#111"/><path d="M16,11 Q16,15 12,17" fill="none" stroke="#2e2e2e" stroke-width="1.2"/><path d="M13,15.5 L11,17.5 L14,18" fill="#111"/></g>
<path d="M714,56 l4,4 l4,-4" fill="none" stroke="#333" stroke-width="1.6"/>
<line x1="729.5" y1="45" x2="729.5" y2="71" stroke="#cfcfcf" stroke-width="1.5" />
<g transform="translate(741,49)" stroke-linejoin="round"><path d="M0.5,0.5 L16.5,2.5 V17.5 L0.5,15.5 Z" fill="#d9d9d9" stroke="#2e2e2e" stroke-width="1.1"/><path d="M9,1.5 V8.5 L16.5,9.5" fill="none" stroke="#2e2e2e" stroke-width="0.9"/><path d="M9.5,2 L16,3 V9 L9.5,8 Z" fill="#eee"/></g>
<g transform="translate(774,49)" stroke-linejoin="round"><circle cx="9" cy="9" r="8.5" fill="#fff" stroke="#2e2e2e" stroke-width="1"/><circle cx="9" cy="9" r="6.5" fill="#fff" stroke="#2e2e2e" stroke-width="0.9"/><path d="M9,2.5 V9 H15.5 A6.5,6.5 0 0 0 9,2.5 Z" fill="#d9d9d9" stroke="#2e2e2e" stroke-width="0.9"/></g>
<g transform="translate(808,49)" stroke-linejoin="round"><path d="M0.5,10 L2.5,8 H8 V2 L10,0 H16 L18,2 V17.5 H2.5 L0.5,15.5 Z" fill="#fff" stroke="#2e2e2e"/><path d="M2.5,8 V17.5 M2.5,10 H10 V2 H18" fill="none" stroke="#2e2e2e" stroke-width="0.8"/><path d="M1,1 Q5,0 7,4" fill="none" stroke="#111" stroke-width="1.6"/><path d="M4.5,5 L8,6.5 L8.5,2.5 Z" fill="#111"/></g>
<text x="841" y="63.5" font-size="15" fill="#222" font-weight="normal" font-style="normal" text-anchor="start" >(</text>
<text x="846" y="63.5" font-size="16" fill="#222" font-weight="bold" font-style="italic" text-anchor="start" font-family="Liberation Serif">x</text>
<text x="855" y="63.5" font-size="15" fill="#222" font-weight="normal" font-style="normal" text-anchor="start" >)</text>
<text x="875" y="63.5" font-size="15" fill="#222" font-weight="normal" font-style="normal" text-anchor="start" >(</text>
<circle cx="884" cy="57" r="3.8" fill="none" stroke="#222" stroke-width="1.5"/><path d="M886.7,59.7 l3,3" stroke="#222" stroke-width="1.8"/>
<text x="890" y="63.5" font-size="15" fill="#222" font-weight="normal" font-style="normal" text-anchor="start" >)</text>
<g transform="translate(909,49)" stroke-linejoin="round"><path d="M5,3 l5,-2.75 l5,2.75 v5.5 l-5,2.75 l-5,-2.75 z M5,3 l5,2.75 l5,-2.75 M10,5.75 v5.5" fill="#fff" stroke="#555" stroke-width="0.8"/><path d="M0.5,11 l5,-2.75 l5,2.75 v5.5 l-5,2.75 l-5,-2.75 z M0.5,11 l5,2.75 l5,-2.75 M5.5,13.75 v5.5" fill="#fff" stroke="#555" stroke-width="0.8"/><path d="M10,11 l5,-2.75 l5,2.75 v5.5 l-5,2.75 l-5,-2.75 z M10,11 l5,2.75 l5,-2.75 M15,13.75 v5.5" fill="#fff" stroke="#555" stroke-width="0.8"/><path d="M10,6 V14" stroke="#999" stroke-width="1"/></g>
<line x1="938.5" y1="45" x2="938.5" y2="71" stroke="#cfcfcf" stroke-width="1.5" />
<g transform="translate(949,49)" stroke-linejoin="round"><path d="M0.5,4.5 L8.5,0.5 L16.5,4.5 V13.5 L8.5,17.5 L0.5,13.5 Z" fill="#e8e8e8" stroke="#2e2e2e" stroke-width="1.1"/><path d="M0.5,4.5 L8.5,8.5 L16.5,4.5 M8.5,8.5 V17.5" fill="none" stroke="#2e2e2e" stroke-width="0.9"/><path d="M8.5,8.5 L16.5,4.5 V13.5 L8.5,17.5 Z" fill="#c4c4c4"/><path d="M0.5,4.5 L8.5,0.5 L16.5,4.5 L8.5,8.5 Z" fill="#f4f4f4"/></g>
<g transform="translate(981,48)" stroke-linejoin="round"><g transform="rotate(-10 10 11)"><rect x="1" y="6" width="18" height="12" rx="1.5" fill="#222"/><rect x="0" y="10" width="2" height="3" fill="#222"/><rect x="18" y="9" width="2" height="3" fill="#222"/></g><circle cx="6.5" cy="12" r="2.8" fill="#fff"/><circle cx="13" cy="11" r="2.8" fill="#fff"/><circle cx="6.8" cy="12.3" r="1.2" fill="#222"/><circle cx="12.7" cy="11.3" r="1.2" fill="#222"/><path d="M8,16 q3,1 5,-2" fill="none" stroke="#fff" stroke-width="1"/><path d="M9.5,6 v-4 M6,3 l2,2 M13,2 l-1.5,2" stroke="#333" stroke-width="1"/><circle cx="9.5" cy="2" r="1" fill="#333"/></g>
<g transform="translate(1016,49)" stroke-linejoin="round"><rect x="0" y="0" width="18" height="18" fill="#f7f7f7"/><circle cx="5" cy="5" r="3.3" fill="none" stroke="#aaa" stroke-width="1.1"/><circle cx="13.5" cy="14" r="2" fill="none" stroke="#aaa" stroke-width="1.1"/><path d="M2,7 L11.5,15.5 M7.5,2.5 L15,12.5" stroke="#aaa" stroke-width="0.9"/></g>
<g transform="translate(1049,48)" stroke-linejoin="round"><g transform="rotate(-10 10 11)"><rect x="1" y="6" width="18" height="12" rx="1.5" fill="#222"/><rect x="0" y="10" width="2" height="3" fill="#222"/><rect x="18" y="9" width="2" height="3" fill="#222"/></g><circle cx="6.5" cy="12" r="2.8" fill="#fff"/><circle cx="13" cy="11" r="2.8" fill="#fff"/><circle cx="6.8" cy="12.3" r="1.2" fill="#222"/><circle cx="12.7" cy="11.3" r="1.2" fill="#222"/><path d="M8,16 q3,1 5,-2" fill="none" stroke="#fff" stroke-width="1"/><path d="M9.5,6 v-4 M6,3 l2,2 M13,2 l-1.5,2" stroke="#333" stroke-width="1"/><circle cx="9.5" cy="2" r="1" fill="#333"/></g>
<g transform="translate(1084,49)" stroke-linejoin="round"><path d="M0.5,2 L2,0.5 H15.5 L17,2 V17.5 H2 L0.5,16 Z" fill="#fff" stroke="#2e2e2e" stroke-width="0.9"/><rect x="2.5" y="2.5" width="7" height="7" fill="#a8a8a8"/><rect x="9.5" y="2.5" width="7.5" height="7" fill="#8f8f8f"/><rect x="2.5" y="9.5" width="7" height="8" fill="#8f8f8f"/><rect x="9.5" y="9.5" width="7.5" height="8" fill="#777"/></g>
<g transform="translate(1117,48)" stroke-linejoin="round"><path d="M0.5,0.5 L5,1 L6.5,4 Q10,2 13.5,4 L15,1 L19.5,0.5 L19,5 L15,6.5 Q17,10 15,14 V16 H19.5 V19 H0.5 V16 H5 V14 Q3,10 5,6.5 L1,5 Z" fill="#666"/><circle cx="10" cy="10" r="3.6" fill="#fff"/></g>
<g transform="translate(1151,48)" stroke-linejoin="round"><g transform="translate(10,10)"><circle r="7.2" fill="#888" stroke="#111" stroke-width="1"/><rect x="-2" y="-10" width="4" height="4.5" rx="0.8" fill="#888" stroke="#111" stroke-width="1" transform="rotate(0)"/><rect x="-2" y="-10" width="4" height="4.5" rx="0.8" fill="#888" stroke="#111" stroke-width="1" transform="rotate(45)"/><rect x="-2" y="-10" width="4" height="4.5" rx="0.8" fill="#888" stroke="#111" stroke-width="1" transform="rotate(90)"/><rect x="-2" y="-10" width="4" height="4.5" rx="0.8" fill="#888" stroke="#111" stroke-width="1" transform="rotate(135)"/><rect x="-2" y="-10" width="4" height="4.5" rx="0.8" fill="#888" stroke="#111" stroke-width="1" transform="rotate(180)"/><rect x="-2" y="-10" width="4" height="4.5" rx="0.8" fill="#888" stroke="#111" stroke-width="1" transform="rotate(225)"/><rect x="-2" y="-10" width="4" height="4.5" rx="0.8" fill="#888" stroke="#111" stroke-width="1" transform="rotate(270)"/><rect x="-2" y="-10" width="4" height="4.5" rx="0.8" fill="#888" stroke="#111" stroke-width="1" transform="rotate(315)"/><circle r="6.5" fill="#888"/><circle r="2.8" fill="#fff" stroke="#111" stroke-width="1"/></g></g>
<g transform="translate(1188,49)" stroke-linejoin="round"><path d="M0.5,2.5 H13 L8,10 V13 H5.5 V10 Z" fill="#999"/><path d="M0.5,2.5 L6.5,10 L13,2.5" fill="none" stroke="#555" stroke-width="1.1"/><rect x="1" y="13" width="12" height="2.2" rx="1" fill="#777"/><rect x="1" y="16" width="12" height="2" rx="1" fill="#777"/></g>
<line x1="1214.5" y1="45" x2="1214.5" y2="71" stroke="#cfcfcf" stroke-width="1.5" />
<g transform="translate(1223,48)" stroke-linejoin="round"><path d="M3.5,0.5 L13,10" stroke="#333" stroke-width="1.1"/><path d="M6,2 L11,7" stroke="#333" stroke-width="1"/><path d="M0.5,11 L8,4 L15.5,11 L8,19 Z" fill="#fff" stroke="#333" stroke-width="1.1"/><path d="M0.5,11 H15.5 L8,19 Z" fill="#555"/><path d="M17,13 q2,3 1.5,4.5 a1.6,1.6 0 0 1 -3,0 q0,-2 1.5,-4.5 z" fill="#555"/></g>
<rect x="1257.5" y="48.5" width="19" height="19" rx="2.5" fill="#fff" stroke="#888" stroke-width="0.9"/>
<text x="1267.0" y="62.5" font-size="11" fill="#222" font-weight="normal" font-style="normal" text-anchor="middle" >SM</text>
<g transform="translate(1291,49)" stroke-linejoin="round"><g transform="rotate(-6 10 9)"><rect x="0.5" y="2" width="19" height="13" rx="2.5" fill="#fff" stroke="#333" stroke-width="1.5"/><rect x="1" y="2.5" width="18" height="4.5" fill="#333"/><rect x="1" y="12" width="18" height="3" rx="1" fill="#333"/><rect x="4" y="3.5" width="9" height="2" fill="#ddd"/></g></g>
<rect x="1325.5" y="48.5" width="19" height="19" rx="2.5" fill="#fff" stroke="#888" stroke-width="0.9"/>
<text x="1335.0" y="62.5" font-size="11" fill="#222" font-weight="normal" font-style="normal" text-anchor="middle" >Ai</text>
<rect x="1359.5" y="48.5" width="19" height="19" rx="2.5" fill="#fff" stroke="#888" stroke-width="0.9"/>
<text x="1369.0" y="62.5" font-size="11" fill="#222" font-weight="normal" font-style="normal" text-anchor="middle" >Ds</text>
<line x1="1388.5" y1="45" x2="1388.5" y2="71" stroke="#cfcfcf" stroke-width="1.5" />
<g transform="translate(1398,49)" stroke-linejoin="round"><path d="M0.5,3.5 L3,0.5 H6 V11 L9,14 V17.5 H3 L0.5,15 Z" fill="#fff" stroke="#2e2e2e"/><path d="M7,17.5 L17,17.5 V6.5 L13.5,2 V13 L10,17.5" fill="#d9d9d9" stroke="#2e2e2e"/><path d="M3,0.5 V17.5 M6,11 L9,14 H17" fill="none" stroke="#2e2e2e" stroke-width="0.7"/><path d="M9,14 L13.5,13 L17,17.5 H9 Z" fill="#999"/></g>
<g transform="translate(1432,49)" stroke-linejoin="round"><path d="M0.5,10.5 H10.5 V1 L16.5,6 V17.5 H6 Z" fill="#d9d9d9" stroke="#2e2e2e"/><path d="M10.5,1 V10.5 L16.5,17.5 V6 Z" fill="#999" stroke="#2e2e2e" stroke-width="0.9"/></g>
<g transform="translate(1465,49)" stroke-linejoin="round"><path d="M0.5,7.5 L6,6 H11 L15,12 L5,12 Z" fill="#d9d9d9" stroke="#2e2e2e"/><path d="M11,6 L15.5,0.5 L19,5 L15,12 Z" fill="#bbb" stroke="#2e2e2e"/><path d="M5,0.5 L17,15" stroke="#2e2e2e" stroke-width="0.9"/></g>
<g transform="translate(1501,49)" stroke-linejoin="round"><path d="M3,0.5 H16 V17.5 H0.5 V10 H5 V13 H7.5 V7 H5 Q2,7 2,4 Q2,0.5 5,0.5" fill="#d9d9d9" stroke="#2e2e2e"/><path d="M0.5,10 H5 V17.5 H0.5 Z M2,4 Q2,0.5 5,0.5 H9 V7 H5 Q2,7 2,4" fill="#999"/></g>
<g transform="translate(1534,49)" stroke-linejoin="round"><rect x="0.5" y="0.5" width="17.5" height="17" fill="#eee"/><path d="M0.5,0.5 H9 L0.5,9 Z" fill="#999"/><path d="M0.5,17.5 V9 L9,0.5 H18" fill="none" stroke="#2e2e2e" stroke-width="1.1"/></g>
<g transform="translate(1568,49)" stroke-linejoin="round"><path d="M0.5,3 L3,0.5 H14 L16.5,3 V17.5 H3 L0.5,15 Z" fill="#fff" stroke="#2e2e2e"/><path d="M3,0.5 V17.5 M3,9 H16.5" fill="none" stroke="#2e2e2e" stroke-width="0.7"/><path d="M9,12 L15,17" stroke="#999" stroke-width="2"/><path d="M8,5.5 L11,9 L17.5,0.5" fill="none" stroke="#111" stroke-width="2.2"/></g>
<g transform="translate(1602,49)" stroke-linejoin="round"><path d="M0.5,0.5 H17.5 V8 H8 Q5,8 5,11 Q5,13.5 8,13.5 H15 V18.5 M12.5,13.5 V18.5" fill="none" stroke="#2e2e2e" stroke-width="1.2"/></g>
<line x1="1630.5" y1="45" x2="1630.5" y2="71" stroke="#cfcfcf" stroke-width="1.5" />
<rect x="1639.5" y="48.5" width="19" height="19" rx="3" fill="none" stroke="#333" stroke-width="1.3" stroke-dasharray="3.2,2.4"/><path d="M1649,54 v8 M1645,58 h8" stroke="#111" stroke-width="2"/>
<line x1="1668.5" y1="45" x2="1668.5" y2="71" stroke="#cfcfcf" stroke-width="1.5" />
<g transform="translate(1677,49)" stroke-linejoin="round"><path d="M3,1 Q1,1 1,3 V7 L0,9 L1,11 V15 Q1,17 3,17 M16,1 Q18,1 18,3 V7 L19,9 L18,11 V15 Q18,17 16,17" fill="none" stroke="#333" stroke-width="0.9"/><path d="M4,7 L9.5,4.5 L15,7 V13 L9.5,16 L4,13 Z M4,7 L9.5,10 L15,7 M9.5,10 V16" fill="none" stroke="#444" stroke-width="1"/><circle cx="12" cy="3" r="1.8" fill="#222"/><path d="M12,0 V6" stroke="#222" stroke-width="0.8"/></g>
<path d="M1702,56 l4,4 l4,-4" fill="none" stroke="#333" stroke-width="1.6"/>
<rect x="1734" y="42.5" width="160.5" height="31" fill="#f2f2f2" rx="4"/>
<text x="1743" y="63" font-size="13.6" fill="#333" font-weight="normal" font-style="normal" text-anchor="start" >Search tools...</text>
<rect x="1834.5" y="50.5" width="33" height="17" rx="2" fill="#f5f5f5" stroke="#bbb"/><rect x="1868.5" y="50.5" width="16" height="17" rx="2" fill="#f5f5f5" stroke="#bbb"/>
<text x="1851" y="63" font-size="10.5" fill="#444" font-weight="normal" font-style="normal" text-anchor="middle" >alt/⌥</text>
<text x="1876.5" y="63" font-size="11" fill="#444" font-weight="normal" font-style="normal" text-anchor="middle" >c</text>
<circle cx="16" cy="92" r="3" fill="#222"/><path d="M16,84 v3 M16,97 v5" stroke="#222" stroke-width="1.5" stroke-dasharray="1.5,1.5"/><path d="M25,93 v8 M21,97 h8" stroke="#1f5fc2" stroke-width="1.8"/>
<ellipse cx="20" cy="126" rx="9" ry="6" fill="#222"/><path d="M14,129 l-2,5 l6,-3 z" fill="#222"/>
<path d="M13,155 h12 v16 h-12 z" fill="none" stroke="#222" stroke-width="1.6"/><path d="M15,159 h6 M15,163 h4 M15,167 h3" stroke="#222" stroke-width="1.3"/><path d="M19,168 l8,-10 l2,2 l-8,10 z" fill="#222"/>
<circle cx="21" cy="199" r="7" fill="none" stroke="#222" stroke-width="1.6"/><path d="M21,199 l3,-4 M19,190 h4 M10,197 h4 M11,201 h4" stroke="#222" stroke-width="1.4"/>
<circle cx="20" cy="232" r="9.5" fill="#222"/><path d="M20,226 l5,3 v6 l-5,3 l-5,-3 v-6 z" fill="none" stroke="#fff" stroke-width="1.2"/><circle cx="20" cy="232" r="2" fill="none" stroke="#fff" stroke-width="1"/><path d="M26,238 l4,4" stroke="#222" stroke-width="2.5"/>
<line x1="0" y1="252" x2="39" y2="252" stroke="#d6d6d6" stroke-width="1" />
<rect x="12" y="261" width="16" height="17" rx="2" fill="none" stroke="#222" stroke-width="1.6"/><path d="M14.5,266 l1.5,1.5 l2,-2.5 M14.5,270.5 l1.5,1.5 l2,-2.5 M14.5,275 l1.5,1.5 l2,-2.5" fill="none" stroke="#222" stroke-width="1"/><path d="M20,266 h6 M20,270.5 h6 M20,275 h6" stroke="#222" stroke-width="1.3"/>
<rect x="11" y="1058" width="16" height="11" fill="#222"/><circle cx="21" cy="1066" r="4.5" fill="#fff" stroke="#222" stroke-width="2"/><path d="M24,1069 l4,4" stroke="#222" stroke-width="2.2"/>
<path d="M52,93 h14 l-5.5,7 v7 l-3,-2 v-5 z" fill="none" stroke="#333" stroke-width="1.3"/>
<rect x="79.5" y="84.5" width="157" height="29" rx="3" fill="#fff" stroke="#bdbdbd"/>
<text x="86" y="105" font-size="12.8" fill="#8a8a8a" font-weight="normal" font-style="italic" text-anchor="start" >Filter by name or type</text>
<text x="44" y="135" font-size="13.2" fill="#1f2226" font-weight="normal" font-style="normal" text-anchor="start"  stroke="#1f2226" stroke-width="0.25">Features (19)</text>
<path d="M146.5,125 v-2.5 h5.5 l1.5,1.5 h10 v14 h-17" fill="none" stroke="#333" stroke-width="1.1"/><path d="M146.5,125 v13" stroke="#333" stroke-width="1.1" stroke-dasharray="2,1.5"/><path d="M151,128.5 v7 M147.5,132 h7" stroke="#1f5fc2" stroke-width="1.9"/>
<rect x="179" y="122" width="4" height="15" fill="#333" />
<rect x="187" y="122" width="4" height="15" fill="#333" />
<circle cx="215" cy="131" r="7" fill="none" stroke="#333" stroke-width="1.6"/><path d="M212,128 l5,5 M212,121.5 h6 M215,121.5 v2.5 M220,124 l1.5,-1.5" stroke="#333" stroke-width="1.6"/>
<defs><clipPath id="treeclip"><rect x="40" y="144" width="205" height="905"/></clipPath></defs>
<g clip-path="url(#treeclip)">
<rect x="40" y="498" width="200" height="23.5" fill="#eceef0" />
<line x1="40" y1="521.5" x2="240" y2="521.5" stroke="#a9d3ef" stroke-width="1" />
<rect x="40" y="550" width="200" height="23.5" fill="#eceef0" />
<line x1="40" y1="573.5" x2="240" y2="573.5" stroke="#a9d3ef" stroke-width="1" />
<rect x="40" y="835" width="200" height="24" fill="#b5daf3" />
<line x1="49.5" y1="144" x2="49.5" y2="211" stroke="#d9d9d9" stroke-width="1" />
<line x1="49.5" y1="287" x2="49.5" y2="393" stroke="#d9d9d9" stroke-width="1" />
<line x1="49.5" y1="417" x2="49.5" y2="497" stroke="#d9d9d9" stroke-width="1" />
<line x1="49.5" y1="522" x2="49.5" y2="575" stroke="#d9d9d9" stroke-width="1" />
<line x1="49.5" y1="625" x2="49.5" y2="702" stroke="#d9d9d9" stroke-width="1" />
<path d="M66,139 l14,3 v13 l-14,-3 z" fill="#ddd" stroke="#666" stroke-width="1"/><path d="M71,140 v6 l9,2" fill="none" stroke="#666" stroke-width="1"/>
<text x="85" y="151" font-size="13" fill="#1f2226" font-weight="normal" font-style="normal" text-anchor="start"  stroke="#1f2226" stroke-width="0.25">Top</text>
<path d="M66,165 l14,3 v13 l-14,-3 z" fill="#ddd" stroke="#666" stroke-width="1"/><path d="M71,166 v6 l9,2" fill="none" stroke="#666" stroke-width="1"/>
<text x="85" y="177" font-size="13" fill="#1f2226" font-weight="normal" font-style="normal" text-anchor="start"  stroke="#1f2226" stroke-width="0.25">Front</text>
<path d="M66,191 l14,3 v13 l-14,-3 z" fill="#ddd" stroke="#666" stroke-width="1"/><path d="M71,192 v6 l9,2" fill="none" stroke="#666" stroke-width="1"/>
<text x="85" y="203" font-size="13" fill="#1f2226" font-weight="normal" font-style="normal" text-anchor="start"  stroke="#1f2226" stroke-width="0.25">Right</text>
<path d="M47,219 l5,5 l-5,5" fill="none" stroke="#555" stroke-width="1.8"/>
<path d="M66,221 l7,-4 l7,4 v8 l-7,4 l-7,-4 z M66,221 l7,4 l7,-4 M73,225 v8" fill="none" stroke="#bbb" stroke-width="1.1"/>
<text x="86" y="229" font-size="13" fill="#9a9a9a" font-weight="normal" font-style="normal" text-anchor="start" >Origin Cube</text>
<circle cx="200" cy="224" r="3.2" fill="#222"/><path d="M200,216 v4 M200,228 v4" stroke="#222" stroke-width="1.4" stroke-dasharray="1.5,1.5"/>
<path d="M49,254 l10,-11 l2.5,2.5 l-10,11 h-2.5 z" fill="none" stroke="#444" stroke-width="1.1"/><line x1="47" y1="257" x2="62" y2="257" stroke="#8fa8d8" stroke-width="0.9"/>
<text x="66" y="255" font-size="13" fill="#1f2226" font-weight="normal" font-style="normal" text-anchor="start"  stroke="#1f2226" stroke-width="0.25">Layout Sketch</text>
<path d="M45,273 l5,5 l5,-5" fill="none" stroke="#555" stroke-width="1.8"/>
<path d="M65.5,269.5 h5 l2,2 h9 v11 h-16 z" fill="none" stroke="#777" stroke-width="1.1"/>
<text x="86" y="281" font-size="13" fill="#1f2226" font-weight="normal" font-style="normal" text-anchor="start"  stroke="#1f2226" stroke-width="0.25">Plates (4)</text>
<path d="M67,306 l10,-11 l2.5,2.5 l-10,11 h-2.5 z" fill="none" stroke="#999" stroke-width="1.1"/><line x1="65" y1="309" x2="80" y2="309" stroke="#8fa8d8" stroke-width="0.9"/>
<text x="85" y="307" font-size="13" fill="#9a9a9a" font-weight="normal" font-style="normal" text-anchor="start" >Plate Sketch</text>
<g transform="translate(65,320.5) scale(0.85)" stroke-linejoin="round"><path d="M0.5,2.5 L2.5,0.5 H15.5 L17.5,2.5 V17.5 H2.5 L0.5,15.5 Z" fill="#fff" stroke="#333"/><path d="M2.5,0.5 V17.5 M2.5,2.5 H17.5" fill="none" stroke="#333" stroke-width="0.7"/><path d="M5.5,7.5 L7,6 H17.5 V17.5 H7 L5.5,16 Z" fill="#8f8f8f" stroke="#333"/><path d="M7,6 V17.5 M7,7.5 H17.5" stroke="#333" stroke-width="0.6" fill="none"/></g>
<text x="85" y="333" font-size="13" fill="#1f2226" font-weight="normal" font-style="normal" text-anchor="start"  stroke="#1f2226" stroke-width="0.25">Plate Extrude</text>
<path d="M67,358 l10,-11 l2.5,2.5 l-10,11 h-2.5 z" fill="none" stroke="#999" stroke-width="1.1"/><line x1="65" y1="361" x2="80" y2="361" stroke="#8fa8d8" stroke-width="0.9"/>
<text x="85" y="359" font-size="13" fill="#9a9a9a" font-weight="normal" font-style="normal" text-anchor="start" >Top Plate Sketch w/ M...</text>
<g transform="translate(65,372.5) scale(0.85)" stroke-linejoin="round"><path d="M0.5,2.5 L2.5,0.5 H15.5 L17.5,2.5 V17.5 H2.5 L0.5,15.5 Z" fill="#fff" stroke="#333"/><path d="M2.5,0.5 V17.5 M2.5,2.5 H17.5" fill="none" stroke="#333" stroke-width="0.7"/><path d="M5.5,7.5 L7,6 H17.5 V17.5 H7 L5.5,16 Z" fill="#8f8f8f" stroke="#333"/><path d="M7,6 V17.5 M7,7.5 H17.5" stroke="#333" stroke-width="0.6" fill="none"/></g>
<text x="85" y="385" font-size="13" fill="#1f2226" font-weight="normal" font-style="normal" text-anchor="start"  stroke="#1f2226" stroke-width="0.25">Top Plate Extrude</text>
<path d="M45,403 l5,5 l5,-5" fill="none" stroke="#555" stroke-width="1.8"/>
<path d="M65.5,399.5 h5 l2,2 h9 v11 h-16 z" fill="none" stroke="#777" stroke-width="1.1"/>
<text x="86" y="411" font-size="13" fill="#1f2226" font-weight="normal" font-style="normal" text-anchor="start"  stroke="#1f2226" stroke-width="0.25">Tubes (3)</text>
<path d="M67,436 l10,-11 l2.5,2.5 l-10,11 h-2.5 z" fill="none" stroke="#999" stroke-width="1.1"/><line x1="65" y1="439" x2="80" y2="439" stroke="#8fa8d8" stroke-width="0.9"/>
<text x="85" y="437" font-size="13" fill="#9a9a9a" font-weight="normal" font-style="normal" text-anchor="start" >Tube Sketch</text>
<g transform="translate(65,450.5) scale(0.85)" stroke-linejoin="round"><path d="M0.5,2.5 L2.5,0.5 H15.5 L17.5,2.5 V17.5 H2.5 L0.5,15.5 Z" fill="#fff" stroke="#333"/><path d="M2.5,0.5 V17.5 M2.5,2.5 H17.5" fill="none" stroke="#333" stroke-width="0.7"/><path d="M5.5,7.5 L7,6 H17.5 V17.5 H7 L5.5,16 Z" fill="#8f8f8f" stroke="#333"/><path d="M7,6 V17.5 M7,7.5 H17.5" stroke="#333" stroke-width="0.6" fill="none"/></g>
<text x="85" y="463" font-size="13" fill="#1f2226" font-weight="normal" font-style="normal" text-anchor="start"  stroke="#1f2226" stroke-width="0.25">Tube Extrude</text>
<path d="M65.5,478 l5,-3 h10 v13 l-5,3 h-10 z" fill="#aaa" stroke="#444" stroke-width="1"/><path d="M68,481 h2 M72,481 h2 M68,485 h2 M72,485 h2 M68,489 h2 M72,489 h2" stroke="#fff" stroke-width="1.5"/>
<text x="85" y="489" font-size="13" fill="#1f2226" font-weight="normal" font-style="normal" text-anchor="start"  stroke="#1f2226" stroke-width="0.25">1x1 Convert</text>
<circle cx="200" cy="484" r="3.2" fill="#222"/><path d="M200,476 v4 M200,488 v4" stroke="#222" stroke-width="1.4" stroke-dasharray="1.5,1.5"/>
<path d="M45,507 l5,5 l5,-5" fill="none" stroke="#555" stroke-width="1.8"/>
<path d="M65.5,503.5 h5 l2,2 h9 v11 h-16 z" fill="none" stroke="#777" stroke-width="1.1"/>
<text x="86" y="515" font-size="13" fill="#1f2226" font-weight="normal" font-style="normal" text-anchor="start"  stroke="#1f2226" stroke-width="0.25">Motor Spacer (2)</text>
<path d="M67,540 l10,-11 l2.5,2.5 l-10,11 h-2.5 z" fill="none" stroke="#999" stroke-width="1.1"/><line x1="65" y1="543" x2="80" y2="543" stroke="#8fa8d8" stroke-width="0.9"/>
<text x="85" y="541" font-size="13" fill="#9a9a9a" font-weight="normal" font-style="normal" text-anchor="start" >Motor Spacer Sketch</text>
<g transform="translate(65,554.5) scale(0.85)" stroke-linejoin="round"><path d="M0.5,2.5 L2.5,0.5 H15.5 L17.5,2.5 V17.5 H2.5 L0.5,15.5 Z" fill="#fff" stroke="#333"/><path d="M2.5,0.5 V17.5 M2.5,2.5 H17.5" fill="none" stroke="#333" stroke-width="0.7"/><path d="M5.5,7.5 L7,6 H17.5 V17.5 H7 L5.5,16 Z" fill="#8f8f8f" stroke="#333"/><path d="M7,6 V17.5 M7,7.5 H17.5" stroke="#333" stroke-width="0.6" fill="none"/></g>
<text x="85" y="567" font-size="13" fill="#1f2226" font-weight="normal" font-style="normal" text-anchor="start"  stroke="#1f2226" stroke-width="0.25">Motor Mount Spacer</text>
<rect x="45" y="585" width="190" height="7" fill="#b5b5b5" />
<path d="M45,611 l5,5 l5,-5" fill="none" stroke="#555" stroke-width="1.8"/>
<path d="M65.5,607.5 h5 l2,2 h9 v11 h-16 z" fill="none" stroke="#aaa" stroke-width="1.1"/>
<text x="86" y="619" font-size="13" fill="#9a9a9a" font-weight="normal" font-style="italic" text-anchor="start" >Belts (4)</text>
<text x="63" y="645" font-size="13" fill="#aaa" font-weight="bold" font-style="italic" text-anchor="start" >(x)</text>
<text x="86" y="645" font-size="13" fill="#9a9a9a" font-weight="normal" font-style="italic" text-anchor="start" >#Belt_Distance = (7/1...</text>
<g fill="none" stroke="#bbb" stroke-width="1.1"><ellipse cx="70" cy="663" rx="4.5" ry="3.5"/><circle cx="77" cy="669" r="2.5"/><path d="M67,666 l8,5 M73,661 l6,6"/></g>
<text x="86" y="671" font-size="13" fill="#9a9a9a" font-weight="normal" font-style="italic" text-anchor="start" >Motor Belt</text>
<circle cx="200" cy="666" r="3.2" fill="#222"/><path d="M200,658 v4 M200,670 v4" stroke="#222" stroke-width="1.4" stroke-dasharray="1.5,1.5"/>
<g fill="none" stroke="#bbb" stroke-width="1.1"><ellipse cx="70" cy="689" rx="4.5" ry="3.5"/><circle cx="77" cy="695" r="2.5"/><path d="M67,692 l8,5 M73,687 l6,6"/></g>
<text x="86" y="697" font-size="13" fill="#9a9a9a" font-weight="normal" font-style="italic" text-anchor="start" >Bottom Belt</text>
<circle cx="200" cy="692" r="3.2" fill="#222"/><path d="M200,684 v4 M200,696 v4" stroke="#222" stroke-width="1.4" stroke-dasharray="1.5,1.5"/>
<line x1="40" y1="703.5" x2="240" y2="703.5" stroke="#d6d6d6" stroke-width="1" />
<path d="M45,714 l5,5 l5,-5" fill="none" stroke="#555" stroke-width="1.8"/>
<text x="64" y="722" font-size="13" fill="#1f2226" font-weight="normal" font-style="normal" text-anchor="start"  stroke="#1f2226" stroke-width="0.25">Parts (5)</text>
<g transform="translate(65,734.5)" stroke="#444" stroke-width="0.9" stroke-linejoin="round"><path d="M0.5,8.5 L3,6.5 H6.5 V2.5 L9,0.5 H14.5 V13 L12,15 H2.5 L0.5,13 Z" fill="#fff"/><path d="M0.5,8.5 H6.5 V2.5 H12 V15 M12,2.5 L14.5,0.5 M6.5,8.5 L9,6.5 V0.5 M2.5,15 V8.5" fill="none"/></g>
<text x="85" y="748" font-size="13" fill="#1f2226" font-weight="normal" font-style="normal" text-anchor="start"  stroke="#1f2226" stroke-width="0.25">Origin Cube</text>
<g transform="translate(65,760.5)" stroke="#444" stroke-width="0.9" stroke-linejoin="round"><path d="M0.5,8.5 L3,6.5 H6.5 V2.5 L9,0.5 H14.5 V13 L12,15 H2.5 L0.5,13 Z" fill="#fff"/><path d="M0.5,8.5 H6.5 V2.5 H12 V15 M12,2.5 L14.5,0.5 M6.5,8.5 L9,6.5 V0.5 M2.5,15 V8.5" fill="none"/></g>
<text x="85" y="774" font-size="13" fill="#1f2226" font-weight="normal" font-style="normal" text-anchor="start"  stroke="#1f2226" stroke-width="0.25">Bottom Plate</text>
<g transform="translate(65,786.5)" stroke="#444" stroke-width="0.9" stroke-linejoin="round"><path d="M0.5,8.5 L3,6.5 H6.5 V2.5 L9,0.5 H14.5 V13 L12,15 H2.5 L0.5,13 Z" fill="#fff"/><path d="M0.5,8.5 H6.5 V2.5 H12 V15 M12,2.5 L14.5,0.5 M6.5,8.5 L9,6.5 V0.5 M2.5,15 V8.5" fill="none"/></g>
<text x="85" y="800" font-size="13" fill="#1f2226" font-weight="normal" font-style="normal" text-anchor="start"  stroke="#1f2226" stroke-width="0.25">Top Plate</text>
<g transform="translate(65,812.5)" stroke="#444" stroke-width="0.9" stroke-linejoin="round"><path d="M0.5,8.5 L3,6.5 H6.5 V2.5 L9,0.5 H14.5 V13 L12,15 H2.5 L0.5,13 Z" fill="#fff"/><path d="M0.5,8.5 H6.5 V2.5 H12 V15 M12,2.5 L14.5,0.5 M6.5,8.5 L9,6.5 V0.5 M2.5,15 V8.5" fill="none"/></g>
<text x="85" y="826" font-size="13" fill="#1f2226" font-weight="normal" font-style="normal" text-anchor="start"  stroke="#1f2226" stroke-width="0.25">Tube 1"x1"x7"</text>
<g transform="translate(65,838.5)" stroke="#444" stroke-width="0.9" stroke-linejoin="round"><path d="M0.5,8.5 L3,6.5 H6.5 V2.5 L9,0.5 H14.5 V13 L12,15 H2.5 L0.5,13 Z" fill="#fff"/><path d="M0.5,8.5 H6.5 V2.5 H12 V15 M12,2.5 L14.5,0.5 M6.5,8.5 L9,6.5 V0.5 M2.5,15 V8.5" fill="none"/></g>
<text x="85" y="852" font-size="13" fill="#1f2226" font-weight="normal" font-style="normal" text-anchor="start"  stroke="#1f2226" stroke-width="0.25">Motor Spacer Block</text>
</g>
<rect x="245.5" y="538.5" width="32" height="33" fill="#fff" stroke="#d0d0d0"/><path d="M255,551 v12 M259,549 h11 M259,555 h11 M259,561 h11 M253,547 l2,2 l2,-2" fill="none" stroke="#333" stroke-width="1.2"/>
<path d="M48,1065 h16 M56,1057 v16" stroke="#444" stroke-width="2.4"/>
<rect x="74" y="1051" width="40" height="28" fill="#e6e6e6" rx="3"/>
<path d="M83,1065 l8,-7 l8,7 v8 h-5 v-5 h-6 v5 h-5 z" fill="#444"/><rect x="94" y="1056" width="2.5" height="5" fill="#444"/>
<path d="M107,1051 h132 l6,14 l-6,14 h-132 l6,-14 z" fill="#fff"/>
<text x="130" y="1068" font-size="13.5" fill="#555" font-weight="normal" font-style="normal" text-anchor="start" >Exercise 7 - Ver</text>
<rect x="248" y="1051" width="198" height="28" fill="#e9e9e9" rx="2"/>
<circle cx="267" cy="1063" r="6.3" fill="#78a8e4"/><circle cx="267" cy="1063" r="2.6" fill="#fff"/><rect x="266" y="1057.5" width="2" height="2.2" fill="#fff"/><rect x="266" y="1066.3" width="2" height="2.2" fill="#fff"/>
<path d="M278.5,1057 l2.5,-2.5 h10 l3,3 v14 h-13 l-2.5,-2.5 z" fill="#fff" stroke="#222" stroke-width="1"/><rect x="280.5" y="1056" width="10" height="10" fill="#8f8f8f" stroke="#333" stroke-width="0.8"/><path d="M290.5,1066 l3.5,3.5" stroke="#222" stroke-width="0.8"/>
<text x="300" y="1069" font-size="13.9" fill="#555" font-weight="normal" font-style="normal" text-anchor="start" >Exercise 7 Assembly</text>
<rect x="450" y="1051" width="198" height="28" fill="#ffffff" />
<rect x="450" y="1076" width="198" height="2.5" fill="#1f5fc2" />
<path d="M461.5,1061 l4,-2 v13 h-4 z M466,1061 l6,-4 l5,1 v14 h-5 v-10 z" fill="#fff" stroke="#444" stroke-width="1"/>
<text x="482" y="1069" font-size="13.7" fill="#333" font-weight="normal" font-style="normal" text-anchor="start" >Exercise 7 Part Studio</text>
<path d="M1822.5,1036 H1827.5 V1034 Q1827.5,1030 1832.5,1030 Q1837.5,1030 1837.5,1034 V1038 Q1837.5,1041.5 1834,1041.5 H1822.5 Z" fill="#fff" stroke="#222" stroke-width="1.1"/><ellipse cx="1832.5" cy="1033.4" rx="4.3" ry="2.6" fill="none" stroke="#222" stroke-width="1"/><ellipse cx="1832.5" cy="1033.4" rx="1.8" ry="1" fill="none" stroke="#222" stroke-width="0.8"/><path d="M1824.5,1041.5 v-1.5 M1827,1041.5 v-1.5 M1829.5,1041.5 v-1.5 M1832,1041.5 v-1.5 M1834.5,1041.5 v-1.5" stroke="#222" stroke-width="0.7"/>
<path d="M1855.5,1042.5 V1040 A9.8,9.8 0 0 1 1875,1040 V1042.5 Z" fill="#fff" stroke="#222" stroke-width="1.1"/><path d="M1859.5,1040 A5.8,5.8 0 0 1 1871,1040 L1868,1040.5 Q1865.3,1037.5 1862.5,1040.5 Z" fill="none" stroke="#222" stroke-width="1"/><path d="M1857.5,1040 A7.8,7.8 0 0 1 1873,1040" fill="none" stroke="#777" stroke-width="0.6" stroke-dasharray="0.8,1"/>
<path d="M1895.5,1038 L1896.5,1029.5 H1904.5 L1905.5,1038 M1900.5,1029.5 V1040.5" fill="none" stroke="#222" stroke-width="0.9"/><path d="M1900.5,1029.5 V1040.5" stroke="#888" stroke-width="1.2"/><rect x="1893" y="1037" width="4.5" height="1.5" fill="#222"/><rect x="1903.3" y="1037" width="4.5" height="1.5" fill="#222"/><rect x="1893" y="1041.5" width="14" height="1.8" fill="#222"/>
<path d="M1919,400.5 h-30.5 v132 h30.5 M1888.5,433.5 h31 M1888.5,466.5 h31 M1888.5,499.5 h31" fill="none" stroke="#cfcfcf"/>
<path d="M1919,543.5 h-30.5 v165 h30.5 M1888.5,576.5 h31 M1888.5,609.5 h31 M1888.5,642.5 h31 M1888.5,675.5 h31" fill="none" stroke="#cfcfcf"/>
<path d="M1898,424 L1905,409 L1909,411 L1903,424 Z" fill="#666"/><path d="M1900,424 L1909,410 L1913,413 L1905,424 Z" fill="#999"/><path d="M1903,424 L1912,413 L1915,416 L1908,424 Z" fill="#bbb"/><rect x="1896.5" y="421.5" width="18" height="6" rx="1.5" fill="#fff" stroke="#777"/><rect x="1908" y="422" width="6" height="5" fill="#ccc"/><circle cx="1899.5" cy="424.5" r="1.3" fill="#555"/>
<rect x="1895.0" y="441.0" width="2.8" height="2.1" fill="#2a6fd6"/><rect x="1895.0" y="443.6" width="2.8" height="2.1" fill="#2a6fd6"/><rect x="1895.0" y="446.2" width="2.8" height="2.1" fill="#2a6fd6"/><rect x="1898.3" y="441.0" width="2.8" height="2.1" fill="#2a6fd6"/><rect x="1898.3" y="443.6" width="2.8" height="2.1" fill="#2a6fd6"/><rect x="1898.3" y="446.2" width="2.8" height="2.1" fill="#2a6fd6"/><rect x="1901.6" y="441.0" width="2.8" height="2.1" fill="#2a6fd6"/><rect x="1901.6" y="443.6" width="2.8" height="2.1" fill="#2a6fd6"/><rect x="1901.6" y="446.2" width="2.8" height="2.1" fill="#2a6fd6"/><path d="M1900,449 L1907,445.5 L1914,449 V456.5 L1907,460 L1900,456.5 Z M1900,449 L1907,452.5 L1914,449 M1907,452.5 V460" fill="none" stroke="#222" stroke-width="1.1"/>
<rect x="1895.0" y="474.0" width="2.8" height="2.1" fill="#333"/><rect x="1895.0" y="476.6" width="2.8" height="2.1" fill="#333"/><rect x="1895.0" y="479.2" width="2.8" height="2.1" fill="#333"/><rect x="1898.3" y="474.0" width="2.8" height="2.1" fill="#333"/><rect x="1898.3" y="476.6" width="2.8" height="2.1" fill="#333"/><rect x="1898.3" y="479.2" width="2.8" height="2.1" fill="#333"/><rect x="1901.6" y="474.0" width="2.8" height="2.1" fill="#333"/><rect x="1901.6" y="476.6" width="2.8" height="2.1" fill="#333"/><rect x="1901.6" y="479.2" width="2.8" height="2.1" fill="#333"/><path d="M1901,481 L1906.5,478.5 L1912,481 V487 L1906.5,489.5 L1901,487 Z M1901,481 L1906.5,483.5 L1912,481 M1906.5,483.5 V489.5" fill="none" stroke="#333" stroke-width="1"/><path d="M1898.5,479 Q1897,479 1897,481 V484 L1896,485 L1897,486 V490 Q1897,491.5 1898.5,491.5 M1913.5,476 Q1915,476 1915,478 V483 L1916,484 L1915,485 V489 Q1915,491 1913.5,491" fill="none" stroke="#333" stroke-width="0.9"/>
<rect x="1895.0" y="507.0" width="2.8" height="2.1" fill="#333"/><rect x="1895.0" y="509.6" width="2.8" height="2.1" fill="#333"/><rect x="1895.0" y="512.2" width="2.8" height="2.1" fill="#333"/><rect x="1898.3" y="507.0" width="2.8" height="2.1" fill="#333"/><rect x="1898.3" y="509.6" width="2.8" height="2.1" fill="#333"/><rect x="1898.3" y="512.2" width="2.8" height="2.1" fill="#333"/><rect x="1901.6" y="507.0" width="2.8" height="2.1" fill="#333"/><rect x="1901.6" y="509.6" width="2.8" height="2.1" fill="#333"/><rect x="1901.6" y="512.2" width="2.8" height="2.1" fill="#333"/>
<text x="1894.5" y="522.5" font-size="13" fill="#222" font-weight="normal" font-style="normal" text-anchor="start" >(</text>
<text x="1898" y="522.5" font-size="14" fill="#222" font-weight="bold" font-style="italic" text-anchor="start" font-family="Liberation Serif">x</text>
<text x="1906.5" y="522.5" font-size="13" fill="#222" font-weight="normal" font-style="normal" text-anchor="start" >)</text>
<rect x="1893" y="548" width="23.5" height="23.5" fill="#dedede" rx="3"/>
<path d="M1904.5,561 C1902,555 1898,552 1895.5,553 C1896,557 1898,560 1901,561 C1899,563 1899,566 1901,568 C1903,567 1904,565 1904.5,563 C1905,565 1906,567 1908,568 C1910,566 1910,563 1908,561 C1911,560 1913,557 1913.5,553 C1911,552 1907,555 1904.5,561 Z" fill="#111"/>
<rect x="1894" y="582" width="22" height="22" fill="#111" rx="1.5"/>
<rect x="1895.5" y="583.5" width="19" height="19" fill="#1f5fd0" />
<text x="1905" y="600" font-size="14" fill="#fff" font-weight="bold" font-style="normal" text-anchor="middle" font-family="Liberation Serif" textLength="16" lengthAdjust="spacingAndGlyphs">MK</text>
<rect x="1893" y="614.5" width="23.5" height="23.5" fill="#dedede" rx="3"/>
<g transform="rotate(-8 1905 628)"><rect x="1895" y="621" width="20" height="13" rx="2" fill="#222"/></g><circle cx="1900.5" cy="628.5" r="2.8" fill="#fff"/><circle cx="1908" cy="627.5" r="2.8" fill="#fff"/><circle cx="1900.8" cy="628.8" r="1.3" fill="#2a6fd6"/><circle cx="1907.7" cy="627.8" r="1.3" fill="#2a6fd6"/><path d="M1902,633 q3,1 5,-2" fill="none" stroke="#fff" stroke-width="1"/><path d="M1900,617 h10 M1905,616 v5" stroke="#6a7fbf" stroke-width="1.6"/>
<rect x="1893.5" y="647.5" width="22" height="22" fill="#dedede" rx="2"/>
<rect x="1894.5" y="648.5" width="20" height="20" fill="#4caf50" />
<path d="M1897.5,654 q3,-1.5 6,0 v12 q-3,-1.2 -6,0 z M1905.5,654 q3,-1.5 6,0 v12 q-3,-1.2 -6,0 z" fill="#fff"/>
<rect x="1893.5" y="680.5" width="22" height="22" fill="#111" rx="1.5"/>
<rect x="1895" y="682" width="19" height="19" fill="#1f5fd0" />
<path d="M1897.5,687 q3,-1.5 6,0 v12 q-3,-1.2 -6,0 z M1905.5,687 q3,-1.5 6,0 v12 q-3,-1.2 -6,0 z" fill="#fff"/><path d="M1904.5,687 v12" stroke="#777" stroke-width="1"/>
</svg></body></html>
